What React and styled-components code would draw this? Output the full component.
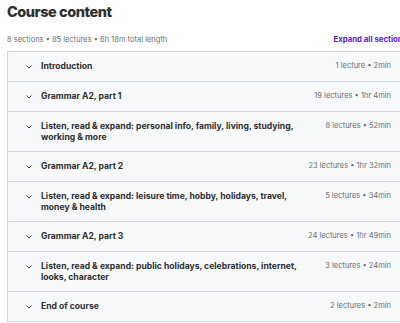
import React from 'react';
import styled, { createGlobalStyle } from 'styled-components';

const GlobalStyle = createGlobalStyle`
  html, body {
    margin: 0;
    padding: 0;
    background: #fff;
    overflow: hidden;
  }
  body {
    font-family: Inter, "Noto Sans", "Liberation Sans", sans-serif;
    color: #2d2f31;
  }
`;

const sections = [
  { title: 'Introduction', meta: '1 lecture • 2min' },
  { title: 'Grammar A2, part 1', meta: '19 lectures • 1hr 4min' },
  { title: 'Listen, read & expand: personal info, family, living, studying, working & more', meta: '8 lectures • 52min' },
  { title: 'Grammar A2, part 2', meta: '23 lectures • 1hr 32min' },
  { title: 'Listen, read & expand: leisure time, hobby, holidays, travel, money & health', meta: '5 lectures • 34min' },
  { title: 'Grammar A2, part 3', meta: '24 lectures • 1hr 49min' },
  { title: 'Listen, read & expand: public holidays, celebrations, internet, looks, character', meta: '3 lectures • 24min' },
  { title: 'End of course', meta: '2 lectures • 2min' },
];

const Chevron = () => (
  <svg width="6" height="4" viewBox="0 0 6 4" fill="none">
    <polyline points="0.8,0.8 3,3 5.2,0.8" stroke="#4a4d50" strokeWidth="1" strokeLinecap="round" strokeLinejoin="round" />
  </svg>
);

const App = () => {
  return (
    <Page>
      <GlobalStyle />
      <Title>Course content</Title>
      <SummaryBar>
        <Summary>8 sections • 85 lectures • 6h 18m total length</Summary>
        <ExpandButton>Expand all sections</ExpandButton>
      </SummaryBar>
      <SectionList>
        {sections.map((s) => (
          <SectionRow key={s.title}>
            <ChevronBox>
              <Chevron />
            </ChevronBox>
            <SectionTitle>{s.title}</SectionTitle>
            <SectionMeta>{s.meta}</SectionMeta>
          </SectionRow>
        ))}
      </SectionList>
    </Page>
  );
};

const Page = styled.div`
  width: 400px;
  padding-left: 7px;
  padding-top: 2px;
`;

const Title = styled.h2`
  margin: 0;
  font-size: 14.5px;
  font-weight: 800;
  line-height: 20px;
  letter-spacing: -0.45px;
`;

const SummaryBar = styled.div`
  display: flex;
  justify-content: space-between;
  align-items: center;
  margin-top: 11px;
  height: 12px;
  margin-bottom: 6px;
`;

const Summary = styled.span`
  font-size: 7.5px;
  color: #6a6f73;
`;

const ExpandButton = styled.button`
  background: transparent;
  border: none;
  padding: 0;
  font-family: inherit;
  font-size: 7.8px;
  font-weight: 700;
  color: #5624d0;
  cursor: pointer;
  white-space: nowrap;
`;

const SectionList = styled.div`
  border: 1px solid #d1d7dc;
  border-bottom: none;
`;

const SectionRow = styled.div`
  display: flex;
  align-items: flex-start;
  background: #f7f9fa;
  border-bottom: 1px solid #d1d7dc;
  padding: 9px 15px 9px 18px;
`;

const ChevronBox = styled.div`
  width: 15px;
  height: 11px;
  display: flex;
  align-items: center;
  justify-content: flex-start;
  flex-shrink: 0;
`;

const SectionTitle = styled.div`
  flex: 1;
  max-width: 268px;
  font-size: 8.6px;
  font-weight: 700;
  line-height: 10.5px;
  color: #2d2f31;
`;

const SectionMeta = styled.div`
  margin-left: auto;
  font-size: 7.5px;
  line-height: 10.5px;
  color: #6a6f73;
  white-space: nowrap;
`;

export default App;
